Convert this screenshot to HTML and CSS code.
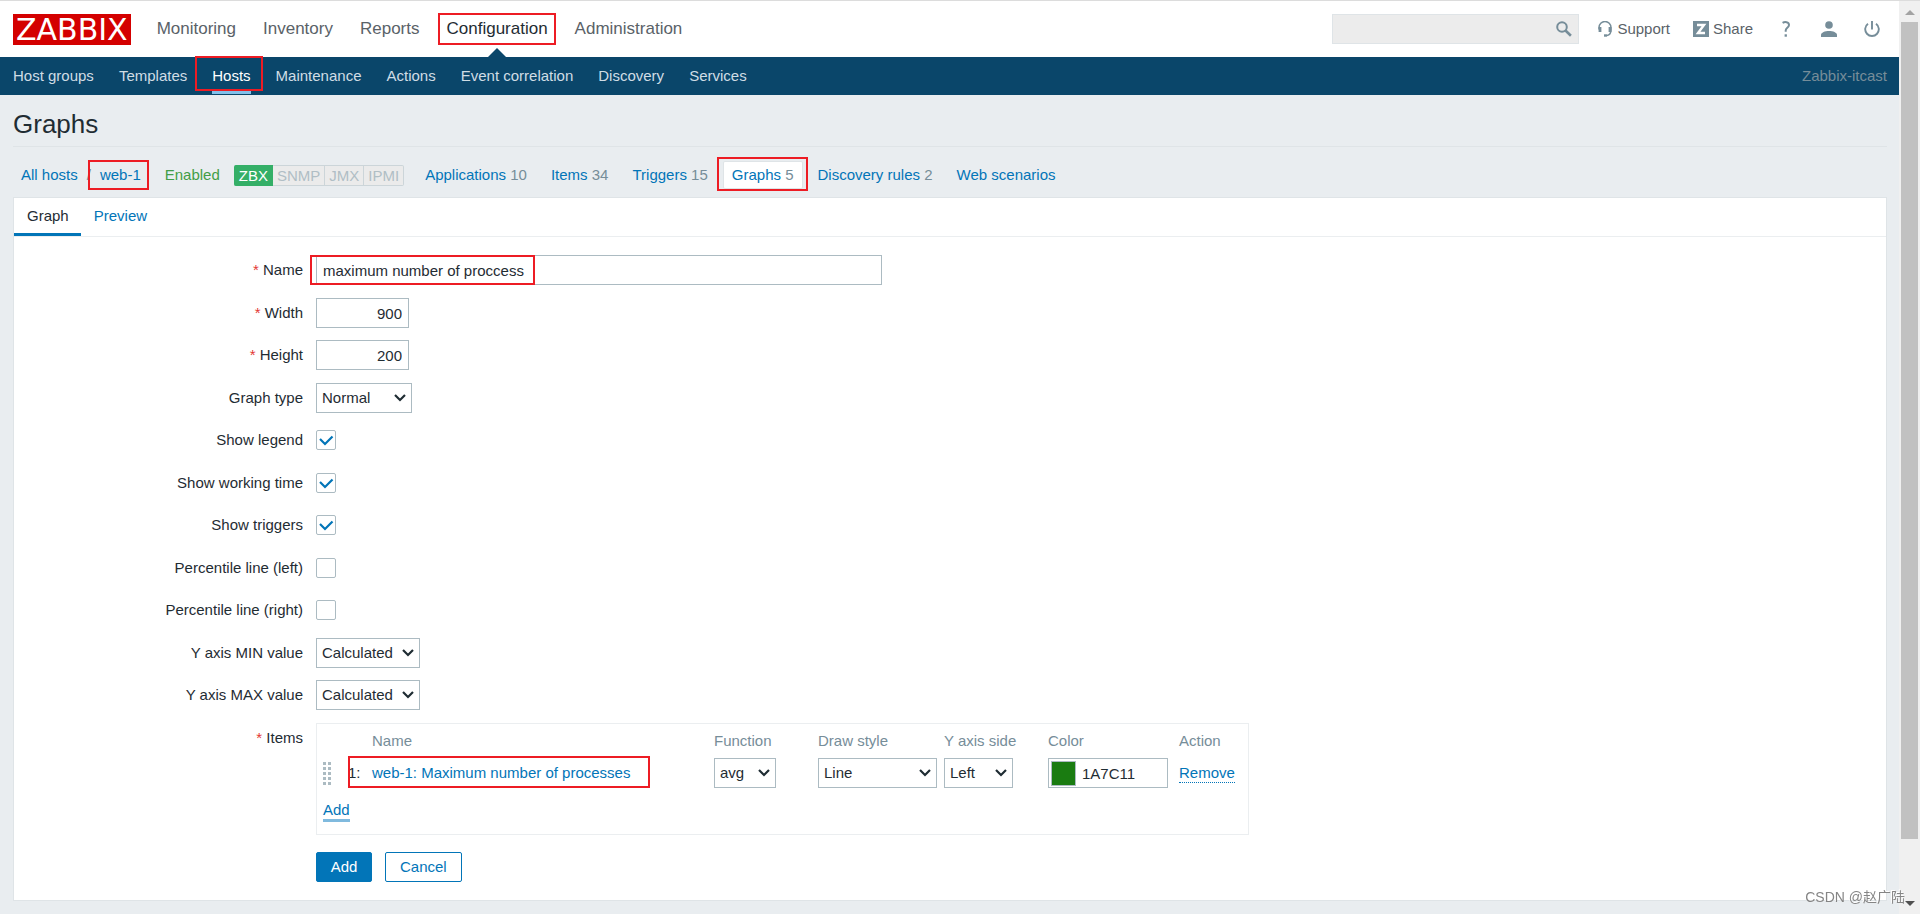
FILE: index.html
```html
<!DOCTYPE html>
<html lang="en">
<head>
<meta charset="utf-8">
<title>Configuration of graphs</title>
<link rel="stylesheet" href="styles.css">
</head>
<body>
<div class="page">
  <header class="header">
    <a class="logo" href="#">ZABBIX</a>
    <nav class="main-nav">
      <a href="#">Monitoring</a>
      <a href="#">Inventory</a>
      <a href="#">Reports</a>
      <a href="#" class="active">Configuration<span class="mark mark-main"></span></a>
      <a href="#">Administration</a>
    </nav>
    <form class="search" role="search">
      <input type="text" aria-label="Search">
      <button type="button" aria-label="Search"><svg width="16" height="16" viewBox="0 0 16 16" fill="none" stroke="#768d99" stroke-width="2"><circle cx="6" cy="6" r="4.8"/><path d="M9.5 9.5l5.4 5.2" stroke-width="2.6"/></svg></button>
    </form>
    <a class="tool" href="#"><svg width="16" height="16" viewBox="0 0 16 16" fill="none" stroke="#768d99"><path d="M2 8.500V6.500a6 6 0 0 1 12 0V9c0 3-1 4.800-4 5.500" stroke-width="1.500"/><path d="M3 6v5M13 6v5" stroke-width="2.800"/><path d="M7 14.500h3" stroke-width="2.400"/></svg>Support</a>
    <a class="tool" href="#"><svg width="16" height="16" viewBox="0 0 16 16"><path fill="#768d99" d="M0 0h16v16H0z"/><path d="M4 4h7L5 12h7" fill="none" stroke="#fff" stroke-width="2.4"/></svg>Share</a>
    <a class="tool-icon" href="#" aria-label="Help"><svg width="16" height="16" viewBox="0 0 16 16" fill="none" stroke="#768d99" stroke-width="2"><path d="M4.6 1.9C6.6.6 11 .5 11 4c0 2.700-3.300 3-3.300 5.500v1.300"/><path d="M6.600 14.500h2.300" stroke-width="2.400"/></svg></a>
    <a class="tool-icon" href="#" aria-label="User profile"><svg width="16" height="16" viewBox="0 0 16 16" fill="#768d99"><circle cx="8" cy="4" r="3.800"/><path d="M0 16v-2c0-2.500 4-4 8-4s8 1.500 8 4v2z"/></svg></a>
    <a class="tool-icon" href="#" aria-label="Sign out"><svg width="16" height="16" viewBox="0 0 16 16" fill="none" stroke="#768d99" stroke-width="1.900"><path d="M4 2.700a6.800 6.800 0 1 0 8 0M8 0v8.500"/></svg></a>
  </header>
  <nav class="sub-nav">
    <a href="#">Host groups</a>
    <a href="#">Templates</a>
    <a href="#" class="active">Hosts<span class="mark mark-sub"></span></a>
    <a href="#">Maintenance</a>
    <a href="#">Actions</a>
    <a href="#">Event correlation</a>
    <a href="#">Discovery</a>
    <a href="#">Services</a>
    <span class="server">Zabbix-itcast</span>
  </nav>
  <main class="content">
    <h1>Graphs</h1>
    <ul class="object-nav">
      <li><a href="#">All hosts</a><span class="slash">/</span><a href="#" class="marked">web-1<span class="mark mark-host"></span></a></li>
      <li class="status">Enabled</li>
      <li class="avail"><span class="on">ZBX</span><span>SNMP</span><span>JMX</span><span>IPMI</span></li>
      <li><a href="#">Applications</a> 10</li>
      <li><a href="#">Items</a> 34</li>
      <li><a href="#">Triggers</a> 15</li>
      <li class="selected"><a href="#">Graphs</a> 5<span class="mark mark-graphs"></span></li>
      <li><a href="#">Discovery rules</a> 2</li>
      <li><a href="#">Web scenarios</a></li>
    </ul>
    <section class="panel">
      <div class="tabs">
        <a href="#" class="active">Graph</a>
        <a href="#">Preview</a>
      </div>
      <form class="form">
        <div class="row"><label class="required" for="name">Name</label><div class="field marked"><input id="name" class="wide" type="text" value="maximum number of proccess"><span class="mark mark-name"></span></div></div>
        <div class="row"><label class="required" for="width">Width</label><div class="field"><input id="width" class="num" type="text" value="900"></div></div>
        <div class="row"><label class="required" for="height">Height</label><div class="field"><input id="height" class="num" type="text" value="200"></div></div>
        <div class="row"><label for="type">Graph type</label><div class="field"><select id="type" class="w-type"><option>Normal</option></select></div></div>
        <div class="row"><label for="legend">Show legend</label><div class="field"><input id="legend" type="checkbox" checked></div></div>
        <div class="row"><label for="work">Show working time</label><div class="field"><input id="work" type="checkbox" checked></div></div>
        <div class="row"><label for="trig">Show triggers</label><div class="field"><input id="trig" type="checkbox" checked></div></div>
        <div class="row"><label for="pleft">Percentile line (left)</label><div class="field"><input id="pleft" type="checkbox"></div></div>
        <div class="row"><label for="pright">Percentile line (right)</label><div class="field"><input id="pright" type="checkbox"></div></div>
        <div class="row"><label for="ymin">Y axis MIN value</label><div class="field"><select id="ymin" class="w-calc"><option>Calculated</option></select></div></div>
        <div class="row"><label for="ymax">Y axis MAX value</label><div class="field"><select id="ymax" class="w-calc"><option>Calculated</option></select></div></div>
        <div class="row"><span class="label required" id="items-label">Items</span>
          <div class="items">
            <table aria-labelledby="items-label">
              <colgroup><col class="c-drag"><col class="c-no"><col class="c-name"><col class="c-func"><col class="c-draw"><col class="c-side"><col class="c-color"><col class="c-action"></colgroup>
              <thead>
                <tr><th></th><th></th><th>Name</th><th>Function</th><th>Draw style</th><th>Y axis side</th><th>Color</th><th>Action</th></tr>
              </thead>
              <tbody>
                <tr>
                  <td><svg class="drag" width="8" height="24" aria-hidden="true"><path d="M1.500 1v24M6.500 1v24" fill="none" stroke="#acbbc2" stroke-width="3" stroke-dasharray="3 2"/></svg></td>
                  <td class="marked">1:<span class="mark mark-item"></span></td>
                  <td><a href="#">web-1: Maximum number of processes</a></td>
                  <td><select class="w-func" aria-label="Function"><option>avg</option></select></td>
                  <td><select class="w-draw" aria-label="Draw style"><option>Line</option></select></td>
                  <td><select class="w-side" aria-label="Y axis side"><option>Left</option></select></td>
                  <td><div class="color"><button type="button" class="swatch" aria-label="Pick color"></button><input type="text" value="1A7C11" aria-label="Color"></div></td>
                  <td><button type="button" class="link">Remove</button></td>
                </tr>
                <tr class="add-row"><td colspan="8"><button type="button" class="link focused">Add</button></td></tr>
              </tbody>
            </table>
          </div>
        </div>
        <div class="actions"><button type="button" class="btn primary">Add</button><button type="button" class="btn">Cancel</button></div>
      </form>
    </section>
  </main>
</div>
<div class="scrollbar" aria-hidden="true"><span class="arrow up"></span><span class="thumb"></span><span class="arrow down"></span></div>
<div class="watermark">CSDN @赵广陆</div>
</body>
</html>
```
FILE: styles.css
```css
* { box-sizing: border-box; }

body {
  margin: 0;
  display: flex;
  min-height: 100vh;
  border-top: 1px solid #dcdcdc;
  background: #e9edf0;
  color: #1f2c33;
  font: 15px/18px "Liberation Sans", Arial, sans-serif;
}

a { color: #0275b8; text-decoration: none; }
input, select, button { font: inherit; color: inherit; margin: 0; }

.page { flex: 1; min-width: 0; }

/* Top bar */
.header {
  display: flex;
  align-items: center;
  height: 56px;
  padding: 0 19px 0 13px;
  background: #fff;
}
.logo {
  margin-right: 26px;
  padding: 0 3px;
  background: #d40000;
  color: #fff;
  font: 30px/31px "DejaVu Sans", sans-serif;
}
.main-nav { display: flex; gap: 27px; margin-right: auto; font-size: 17px; line-height: 56px; }
.main-nav a { position: relative; color: #5a6268; }
.main-nav .active { color: #1f2c33; }
.main-nav .active::after {
  content: "";
  position: absolute;
  left: 50%;
  bottom: 0;
  margin-left: -9px;
  border: 9px solid transparent;
  border-top: 0;
  border-bottom-color: #0a466a;
}
.search {
  display: flex;
  align-items: center;
  width: 247px;
  height: 30px;
  margin-right: 18px;
  border: 1px solid #dfe4e7;
  background: #ececec;
}
.search input[type="text"] { flex: 1; min-width: 0; height: 28px; padding: 0 6px; border: 0; background: none; }
.search button { display: flex; padding: 0 6px; border: 0; background: none; }
.tool { display: flex; align-items: center; gap: 4px; margin-right: 23px; color: #5a6268; }
.tool-icon { display: flex; margin-left: 27px; }
.tool + .tool-icon { margin-left: 2px; }

.sub-nav {
  display: flex;
  gap: 25px;
  height: 38px;
  padding: 0 12px 0 13px;
  background: #0a466a;
  line-height: 38px;
}
.sub-nav a { position: relative; color: #d0dde5; }
.sub-nav .active { color: #fff; }
.sub-nav .active::after {
  content: "";
  position: absolute;
  right: 0;
  bottom: 1px;
  left: 0;
  height: 3px;
  background: #82c0ea;
}
.sub-nav .server { margin-left: auto; color: #768d99; }

/* Page body */
.content { padding: 0 12px 0 13px; }
h1 {
  margin: 0;
  padding: 14px 0 7px;
  border-bottom: 1px solid #dfe4e7;
  font-size: 26px;
  font-weight: 400;
  line-height: 30px;
}
.object-nav {
  display: flex;
  align-items: center;
  gap: 8px;
  margin: 0;
  padding: 15px 0 9px;
  list-style: none;
  color: #768d99;
}
.object-nav li { position: relative; padding: 4px 8px; }
.object-nav .slash { margin: 0 9px; }
.object-nav .selected { background: #fff; box-shadow: 0 0 0 1px #dfe4e7; border-radius: 1px; }
.object-nav .status { padding-right: 6px; color: #429e47; }
.object-nav .avail { display: flex; padding: 0 5px 0 0; }
.avail span {
  padding: 1px 4px 0;
  border: 1px solid #ccd5d9;
  border-left: 0;
  background: #ebebeb;
  color: #b0bec5;
}
.avail .on { padding-left: 5px; border-color: #34af67; border-radius: 2px 0 0 2px; background: #34af67; color: #fff; }
.avail span:last-child { border-radius: 0 2px 2px 0; }

.panel { border: 1px solid #dfe4e7; background: #fff; }
.tabs { display: flex; border-bottom: 1px solid #ebeef0; }
.tabs a { padding: 9px 12px 8px 13px; border-bottom: 3px solid transparent; }
.tabs .active { border-bottom-color: #0275b8; color: #1f2c33; }

/* Form */
.form { padding: 18px 0; }
.row { display: flex; gap: 13px; margin-bottom: 12px; }
.row:nth-child(odd) { margin-bottom: 13px; }
.row > label, .row > .label { flex: 0 0 289px; line-height: 30px; text-align: right; }
.required::before { content: "* "; color: #e33734; }
.field { display: flex; align-items: center; height: 30px; }
input[type="text"] { background: #fff; outline: 0; }
.field input[type="text"] { height: 30px; padding: 0 6px; border: 1px solid #acbbc2; }
.field .wide { width: 566px; }
.field .num { width: 93px; text-align: right; }
select {
  appearance: none;
  display: block;
  height: 30px;
  padding: 0 5px;
  border: 1px solid #acbbc2;
  border-radius: 0;
  background: #fff url("data:image/svg+xml,%3Csvg xmlns='http://www.w3.org/2000/svg' width='12' height='8' fill='none' stroke='%231f2c33' stroke-width='2.2'%3E%3Cpath d='M1 1l5 5 5-5'/%3E%3C/svg%3E") right 5px center no-repeat;
}
.w-type { width: 96px; }
.w-calc { width: 104px; }
.w-func { width: 62px; }
.w-draw { width: 119px; }
.w-side { width: 69px; }
input[type="checkbox"] {
  appearance: none;
  width: 20px;
  height: 20px;
  border: 1px solid #acbbc2;
  border-radius: 2px;
  background: #fff;
}
input[type="checkbox"]:checked {
  background: url("data:image/svg+xml,%3Csvg xmlns='http://www.w3.org/2000/svg' width='18' height='18' fill='none' stroke='%230275b8' stroke-width='2.2'%3E%3Cpath d='M3 8l5 5 7.500-7.500'/%3E%3C/svg%3E") center no-repeat;
}

.items { padding: 5px 6px; border: 1px solid #ebeef0; }
.items table { width: 919px; table-layout: fixed; border-collapse: collapse; }
.c-drag { width: 25px; }
.c-no { width: 24px; }
.c-name { width: 342px; }
.c-func, .c-side { width: 104px; }
.c-draw { width: 126px; }
.c-color { width: 131px; }
.items th { height: 24px; padding: 0; color: #768d99; font-weight: 400; text-align: left; white-space: nowrap; }
.items td { height: 40px; padding: 0; }
.items .add-row td { height: 36px; }
.drag { display: block; }
.color { display: flex; align-items: center; width: 120px; height: 30px; padding: 0 2px; border: 1px solid #acbbc2; }
.swatch { width: 25px; height: 25px; border: 1px solid #acbbc2; background: #1a7c11; }
.color input { flex: 1; min-width: 0; height: 28px; padding: 0 6px; border: 0; }
.link { padding: 0; border: 0; border-bottom: 1px dotted #0275b8; background: none; color: #0275b8; line-height: 18px; }
.link.focused { border-bottom: 3px solid #80bade; }

.actions { display: flex; gap: 13px; margin: 17px 0 0 302px; }
.btn { min-width: 56px; height: 30px; padding: 0 14px; border: 1px solid #0275b8; border-radius: 2px; background: #fff; color: #0275b8; }
.btn.primary { padding: 0 13px; background: #0275b8; color: #fff; }

/* Highlight frames */
.marked { position: relative; }
.mark { position: absolute; z-index: 1; border: 2px solid #ed1c24; pointer-events: none; }
.mark-main { inset: 12px -8px; }
.mark-sub { inset: -1px -12px 4px -17px; }
.mark-host { inset: -6px -8px -7px -12px; }
.mark-graphs { inset: -5px -6px -3px -7px; }
.mark-name { inset: 0 auto 0 -6px; width: 225px; }
.mark-item { inset: 3px auto 5px 0; width: 302px; }

/* Window scrollbar */
.scrollbar {
  display: flex;
  flex-direction: column;
  align-items: center;
  width: 21px;
  padding: 9px 0 8px;
  background: #f0f0f0;
}
.thumb { flex: 1; width: 17px; margin: 7px 0 62px; background: #c1c1c1; }
.arrow { border: 5px solid transparent; }
.up { border-top: 0; border-bottom-color: #a3a3a3; }
.down { border-bottom: 0; border-top-color: #505050; }

.watermark {
  position: fixed;
  right: 15px;
  bottom: 7px;
  color: #858585;
  text-shadow: -1px -1px 0 #fff;
  font: 14px/20px "Liberation Sans", "Noto Sans CJK SC", sans-serif;
}
```
